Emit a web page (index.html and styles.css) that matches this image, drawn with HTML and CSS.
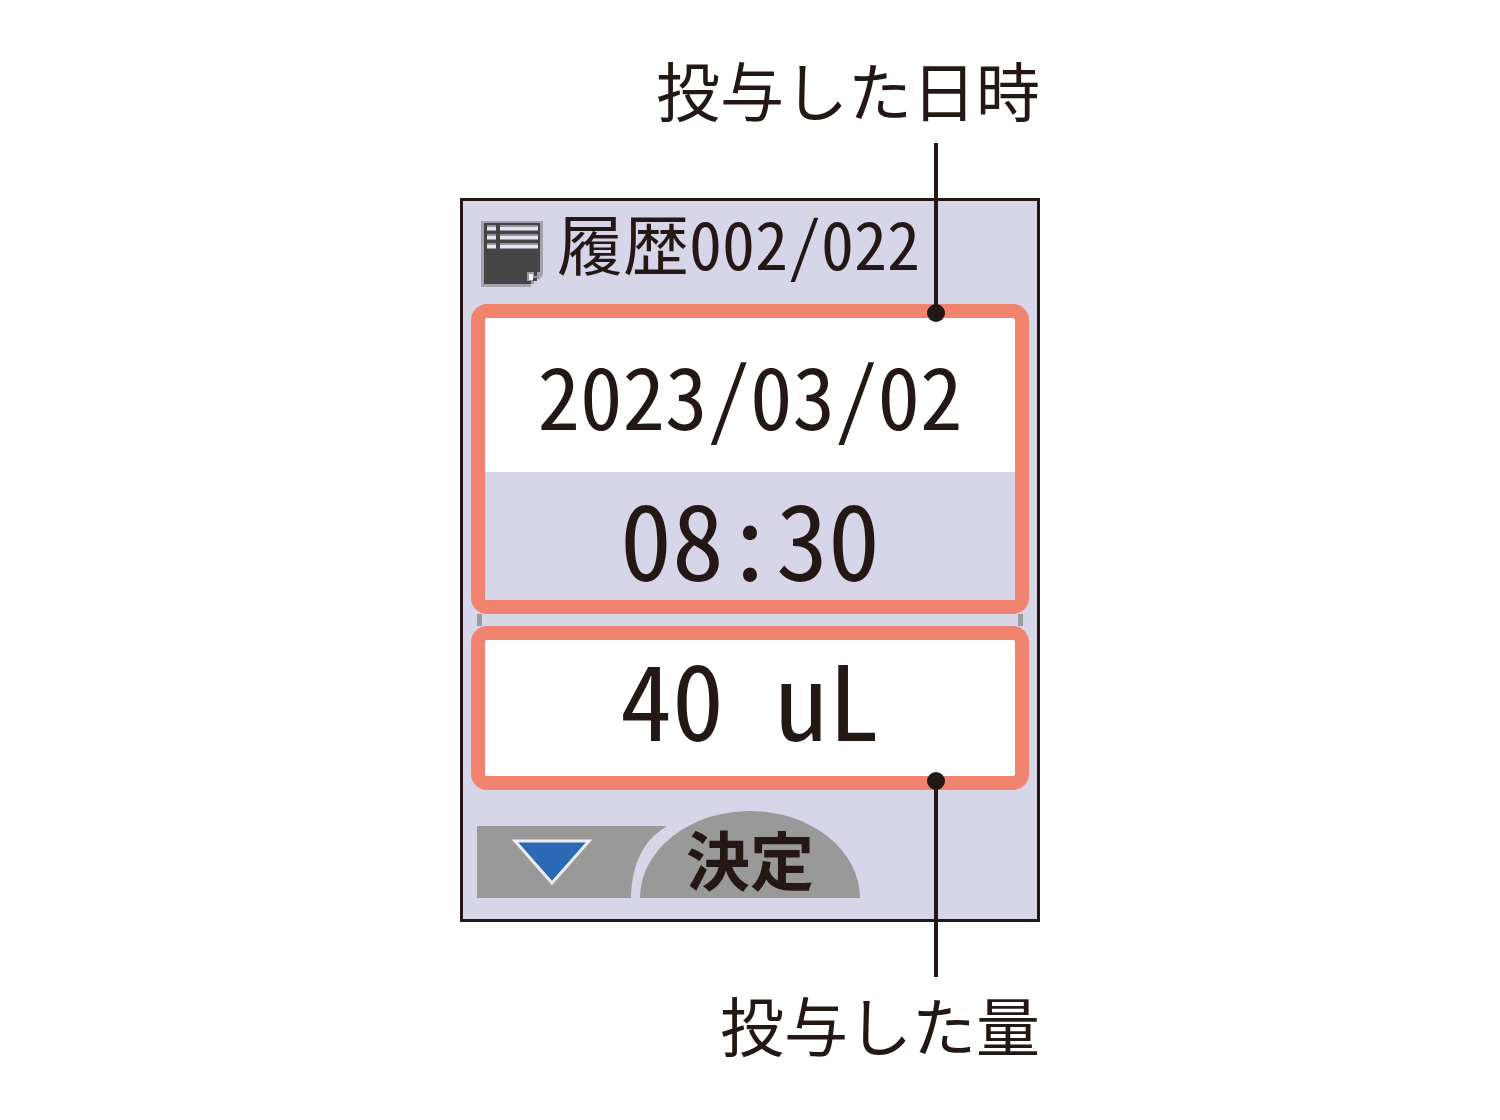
FILE: index.html
```html
<!DOCTYPE html>
<html lang="ja">
<head>
    <meta charset="UTF-8">
    <meta name="viewport" content="width=device-width, initial-scale=1.0">
    <title>履歴</title>
    <link rel="stylesheet" href="styles.css">
</head>
<body>
    <main class="figure">
        <p class="label">投与した日時</p>

        <section class="device">
            <header class="header">
                <svg class="header-icon" width="62" height="66" viewBox="0 0 62 66" aria-hidden="true">
                    <path d="M0 0H62V54L52 66H0Z" fill="#a3a2ac"/>
                    <path d="M3 2H59V51H56V55H52V59H50V63H3Z" fill="#444"/>
                    <path d="M6 4H15V10H6ZM19 4H57V10H19ZM6 13H15V19H6ZM19 13H57V19H19ZM6 22H15V28H6ZM19 22H57V28H19Z" fill="#97969f"/>
                    <path d="M6 6H15V9H6ZM19 6H57V9H19ZM6 15H15V18H6ZM19 15H57V18H19ZM6 24H15V27H6ZM19 24H57V27H19Z" fill="#e6e5f2"/>
                    <path d="M46 51H53V55H58V58L52 64H51V60H46Z" fill="#97969f"/>
                    <path d="M48 53H52V59H48Z" fill="#f4f3fa"/>
                    <path d="M52 57H56V60H52Z" fill="#444"/>
                    <path d="M56 58H62V66H50V63H53V60H56Z" fill="#d7d6e9"/>
                </svg>
                <h1 class="title">履歴002/022</h1>
            </header>

            <div class="box">
                <div class="date">2023/03/02</div>
                <div class="time">08:30</div>
                <span class="pointer pointer-up"></span>
            </div>

            <div class="joint"></div>

            <div class="box">
                <div class="amount">40 uL</div>
                <span class="pointer pointer-down"></span>
            </div>

            <footer class="footer">
                <button type="button" class="down-button" aria-label="下へ">
                    <svg width="190" height="72" viewBox="0 0 190 72" aria-hidden="true">
                        <path d="M0 0H190C172 11 155 30 154 72H0Z" fill="#999"/>
                        <path d="M38 15H112L75 57Z" fill="#2a69b5" stroke="#eeedf2" stroke-width="3"/>
                    </svg>
                </button>
                <button type="button" class="ok-button">決定</button>
            </footer>
        </section>

        <p class="label">投与した量</p>
    </main>
</body>
</html>
```
FILE: styles.css
```css
body {
    margin: 0;
    background-color: #fff;
    color: #231815;
    font-family: "Noto Sans CJK JP", sans-serif;
}
.figure {
    max-width: 580px;
    margin: 0 auto;
    padding-top: 48px;
}
.label {
    margin: 0;
    font-size: 64px;
    line-height: 80px;
    text-align: right;
}
.device {
    margin: 70px 0 61px;
    padding: 0 8px 21px;
    border: 3px solid #231815;
    background-color: #d7d6e9;
}
.header {
    display: flex;
    align-items: flex-start;
    gap: 14px;
    padding: 20px 10px 17px;
}
.header-icon {
    flex: none;
}
.title {
    margin: 0;
    font-size: 66px;
    font-weight: 400;
    line-height: 40px;
    white-space: nowrap;
}
/* half-width digits, all on one pitch */
.title,
.date,
.time,
.amount {
    font-feature-settings: "hwid";
}
.box {
    position: relative;
    border: 14px solid #f0846e;
    border-radius: 16px;
    background-color: #fff;
    text-align: center;
}
.date {
    padding-bottom: 4px;
    font-size: 85px;
    line-height: 150px;
}
.time,
.amount {
    font-size: 104px;
}
.time {
    line-height: 128px;
    background-color: #d7d6e9;
}
.amount {
    padding-bottom: 24px;
    line-height: 112px;
    white-space: pre;
}
.joint {
    height: 12px;
    margin: 0 6px;
    border: solid #9a9aa2;
    border-width: 0 5px;
}
/* leader lines between the labels and the boxes */
.pointer {
    position: absolute;
    right: 77px;
    width: 4px;
    background-color: #231815;
}
.pointer::after {
    content: "";
    position: absolute;
    left: -7px;
    width: 18px;
    height: 18px;
    border-radius: 50%;
    background-color: #231815;
}
.pointer-up {
    bottom: 100%;
    height: 175px;
}
.pointer-up::after {
    bottom: -4px;
}
.pointer-down {
    top: 100%;
    height: 201px;
}
.pointer-down::after {
    top: -4px;
}
.footer {
    display: flex;
    align-items: flex-end;
    padding: 21px 6px 0;
}
button {
    padding: 0;
    border: none;
    background: none;
    color: inherit;
    font-family: inherit;
    cursor: pointer;
}
.down-button svg {
    display: block;
}
.ok-button {
    width: 220px;
    height: 87px;
    margin-left: -27px;
    padding-top: 4px;
    border-radius: 50% 50% 0 0 / 100% 100% 0 0;
    background-color: #999;
    font-size: 64px;
    font-weight: 700;
    line-height: 78px;
}
```
